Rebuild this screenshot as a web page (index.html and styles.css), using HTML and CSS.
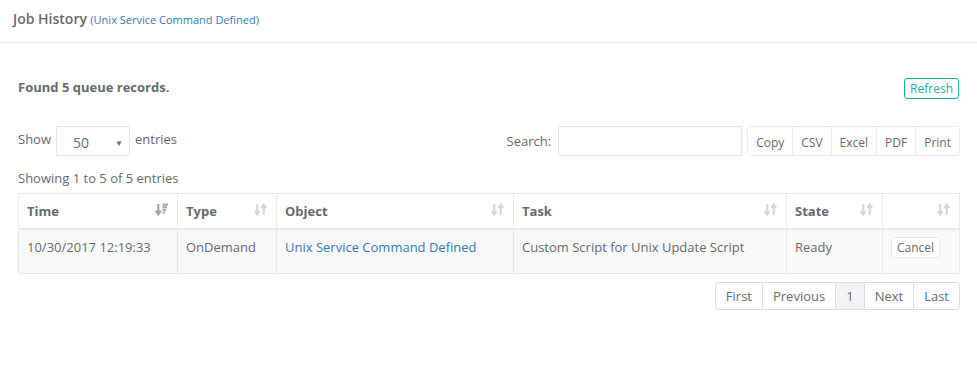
FILE: index.html
```html
<!DOCTYPE html>
<html>
<head>
  <title>Job History</title>
  <link rel="stylesheet" href="styles.css">
</head>
<body>
  <div class="ibox-title">
    <span class="title">Job History</span>
    <a class="subtitle" href="#">(Unix Service Command Defined)</a>
  </div>

  <div class="ibox-content">
    <div class="found-row">
      <strong>Found 5 queue records.</strong>
      <button class="btn-refresh">Refresh</button>
    </div>

    <div class="controls">
      <div class="length">
        Show
        <div class="select"><span>50</span><span class="caret">&#9660;</span></div>
        entries
      </div>
      <div class="right-controls">
        <label class="search">Search: <input type="text"></label>
        <div class="btn-group">
          <button>Copy</button>
          <button>CSV</button>
          <button>Excel</button>
          <button>PDF</button>
          <button>Print</button>
        </div>
      </div>
    </div>

    <div class="info">Showing 1 to 5 of 5 entries</div>

    <table class="grid">
      <colgroup>
        <col class="c-time">
        <col class="c-type">
        <col class="c-object">
        <col class="c-task">
        <col class="c-state">
        <col class="c-action">
      </colgroup>
      <thead>
        <tr>
          <th>Time <svg class="sort active" viewBox="0 0 12 12"><path d="M3 1v8M0.5 7l2.5 3.5L5.5 7" /><path d="M7 1.5h5M7 4h4M7 6.5h3M7 9h2" /></svg></th>
          <th>Type <svg class="sort" viewBox="0 0 12 12"><path d="M3 1v9M0.8 7.5L3 10.5l2.2-3M9 11V2M6.8 4.5L9 1.5l2.2 3" /></svg></th>
          <th>Object <svg class="sort" viewBox="0 0 12 12"><path d="M3 1v9M0.8 7.5L3 10.5l2.2-3M9 11V2M6.8 4.5L9 1.5l2.2 3" /></svg></th>
          <th>Task <svg class="sort" viewBox="0 0 12 12"><path d="M3 1v9M0.8 7.5L3 10.5l2.2-3M9 11V2M6.8 4.5L9 1.5l2.2 3" /></svg></th>
          <th>State <svg class="sort" viewBox="0 0 12 12"><path d="M3 1v9M0.8 7.5L3 10.5l2.2-3M9 11V2M6.8 4.5L9 1.5l2.2 3" /></svg></th>
          <th><svg class="sort" viewBox="0 0 12 12"><path d="M3 1v9M0.8 7.5L3 10.5l2.2-3M9 11V2M6.8 4.5L9 1.5l2.2 3" /></svg></th>
        </tr>
      </thead>
      <tbody>
        <tr>
          <td>10/30/2017 12:19:33</td>
          <td>OnDemand</td>
          <td><a href="#">Unix Service Command Defined</a></td>
          <td>Custom Script for Unix Update Script</td>
          <td>Ready</td>
          <td><button class="btn-cancel">Cancel</button></td>
        </tr>
      </tbody>
    </table>

    <div class="paging">
      <ul class="pagination">
        <li>First</li>
        <li>Previous</li>
        <li class="active">1</li>
        <li>Next</li>
        <li>Last</li>
      </ul>
    </div>
  </div>
</body>
</html>
```

FILE: styles.css
```css
* {
  box-sizing: border-box;
}

body {
  margin: 0;
  background-color: #ffffff;
  font-family: "Open Sans", "Liberation Sans", Arial, sans-serif;
  font-size: 13px;
  color: #676a6c;
}

a {
  color: #337ab7;
  text-decoration: none;
}

button {
  font-family: inherit;
  color: inherit;
  cursor: pointer;
}

.ibox-title {
  height: 43px;
  padding: 9px 13px 0;
  border-bottom: 1px solid #e7eaec;
}

.title {
  font-size: 14px;
  font-weight: 600;
}

.subtitle {
  font-size: 11px;
}

.ibox-content {
  padding: 0 18px;
}

.found-row {
  display: flex;
  justify-content: space-between;
  align-items: center;
  margin-top: 35px;
  height: 21px;
}

.found-row strong {
  font-size: 13px;
  font-weight: 700;
  margin-top: -3px;
}

.btn-refresh {
  height: 21px;
  padding: 0 5px;
  font-size: 12px;
  background: #fff;
  color: #1ab394;
  border: 1px solid #1ab394;
  border-radius: 3px;
}

.controls {
  display: flex;
  justify-content: space-between;
  align-items: center;
  margin-top: 27px;
  height: 30px;
}

.length {
  display: flex;
  align-items: center;
  gap: 5px;
  margin-top: -4px;
}

.select {
  display: flex;
  align-items: center;
  justify-content: space-between;
  width: 74px;
  height: 30px;
  margin-top: 4px;
  padding: 3px 6px 0 16px;
  border: 1px solid #e5e6e7;
  font-size: 14px;
}

.caret {
  font-size: 8px;
}

.right-controls {
  display: flex;
  align-items: center;
  gap: 5px;
  margin-right: -1px;
}

.search {
  display: flex;
  align-items: center;
  gap: 7px;
}

.search input {
  width: 184px;
  height: 30px;
  border: 1px solid #e5e6e7;
  margin: 0;
}

.btn-group {
  display: flex;
  height: 30px;
  border: 1px solid #e7eaec;
  border-radius: 3px;
}

.btn-group button {
  height: 28px;
  padding: 2px 8px 0;
  font-size: 12px;
  background: #fff;
  border: none;
  border-left: 1px solid #e7eaec;
}

.btn-group button:first-child {
  border-left: none;
}

.info {
  margin-top: 14px;
  height: 23px;
  line-height: 16px;
}

.grid {
  width: 941px;
  border-collapse: collapse;
  table-layout: fixed;
  border: 1px solid #e7eaec;
}

.c-time { width: 159px; }
.c-type { width: 99px; }
.c-object { width: 237px; }
.c-task { width: 273px; }
.c-state { width: 96px; }
.c-action { width: 77px; }

.grid th,
.grid td {
  border: 1px solid #e7eaec;
  padding: 0 8px;
  text-align: left;
}

.grid th {
  position: relative;
  height: 35px;
  font-weight: 700;
  border-bottom-width: 2px;
}

.grid td {
  height: 45px;
  background-color: #f9f9f9;
  padding-bottom: 8px;
}

.sort {
  position: absolute;
  right: 9px;
  top: 9px;
  width: 13px;
  height: 13px;
  fill: none;
  stroke: #d6d6d6;
  stroke-width: 2;
}

.sort.active {
  stroke: #a7a7a7;
}

.btn-cancel {
  height: 21px;
  padding: 0 5px;
  font-size: 12px;
  background: #fff;
  border: 1px solid #e7eaec;
  border-radius: 3px;
}

.paging {
  display: flex;
  justify-content: flex-end;
  margin-top: 8px;
  margin-right: -1px;
}

.pagination {
  display: flex;
  list-style: none;
  margin: 0;
  padding: 0;
  border: 1px solid #dddddd;
  border-radius: 4px;
}

.pagination li {
  height: 26px;
  line-height: 26px;
  padding: 0 10px;
  border-left: 1px solid #dddddd;
  color: #676a6c;
}

.pagination li:first-child {
  border-left: none;
}

.pagination li.active {
  background-color: #f4f4f4;
}
```
